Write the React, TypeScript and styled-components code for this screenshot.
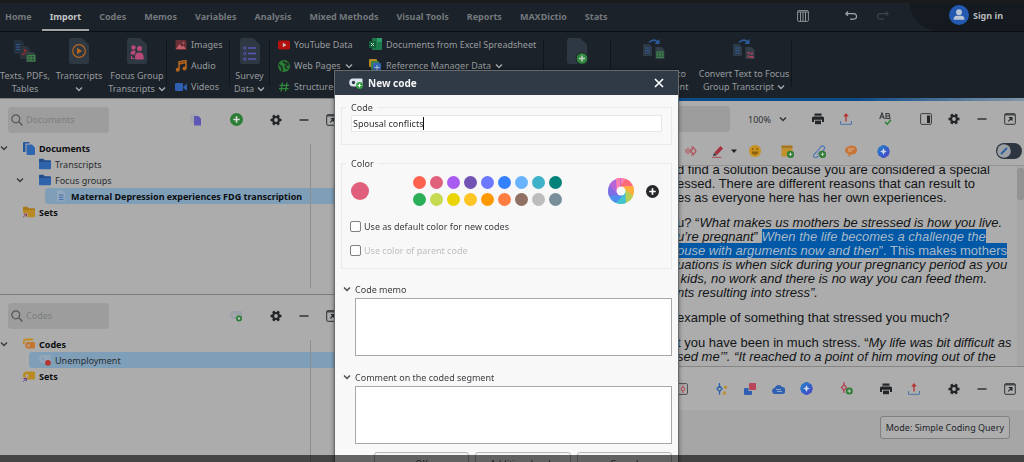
import React, { useState } from "react";
import styled, { createGlobalStyle } from "styled-components";

const GlobalStyle = createGlobalStyle`
  * { box-sizing: border-box; }
  html, body { margin: 0; height: 100%; overflow: hidden; }
  body, button, input, textarea {
    font-family: "Noto Sans", "Open Sans", sans-serif;
    font-size: 9px;
    line-height: 13px;
  }
  #root { height: 100%; }
  button { border: 0; padding: 0; margin: 0; background: none; color: inherit; }
  svg { display: block; flex: none; }
`;

/* ---------- icons ---------- */

type GlyphProps = { size?: number; children: React.ReactNode; box?: string; w?: number };
const Glyph = ({ size = 14, w, box = "0 0 14 14", children }: GlyphProps) => (
  <svg width={w ?? size} height={size} viewBox={box} fill="none" aria-hidden="true">
    {children}
  </svg>
);

const Chevron = ({ color = "#a3a7aa", size = 8 }: { color?: string; size?: number }) => (
  <Glyph size={size} box="0 0 8 8">
    <path d="M1 2.5 4 5.5 7 2.5" stroke={color} strokeWidth="1.5" />
  </Glyph>
);

const GearIcon = () => (
  <Glyph size={12} box="-6 -6 12 12">
    {[0, 60, 120].map((a) => (
      <path key={a} d="M0-5.500V5.500" stroke="#222629" strokeWidth="2.600" transform={`rotate(${a + 30})`} />
    ))}
    <circle r="3.900" fill="#222629" />
    <circle r="1.900" fill="#acacac" />
  </Glyph>
);

const MinusIcon = () => (
  <Glyph size={12} box="0 0 12 12">
    <path d="M1.500 6h9" stroke="#26292c" strokeWidth="1.400" />
  </Glyph>
);

const PopOutIcon = () => (
  <Glyph size={12} box="0 0 12 12">
    <rect x=".7" y=".7" width="10.600" height="10.600" rx="1" stroke="#303234" strokeWidth="1" />
    <path d="M1 1.800h10" stroke="#303234" strokeWidth="1.200" />
    <path d="m4.300 8.300 3.200-3.200M4.800 4.700h3.100v3.100" stroke="#26292c" strokeWidth="1.200" />
  </Glyph>
);

const PrinterIcon = () => (
  <Glyph size={12} box="0 0 12 12">
    <path d="M2.500.5h7v2.200h-7z" fill="#222629" />
    <path d="M1.500 3.400h9A1.500 1.500 0 0 1 12 4.900V9h-2V6.800H2V9H0V4.900a1.500 1.500 0 0 1 1.500-1.500z" fill="#222629" />
    <path d="M3 7.600h6v3.600H3z" fill="#222629" />
  </Glyph>
);

const ExportIcon = () => (
  <Glyph size={12} box="0 0 12 12">
    <path d="M.6 8v3.300h10.800V8" stroke="#4a73a8" strokeWidth="1" />
    <path d="M6 8.500V2" stroke="#b5302f" strokeWidth="1.300" />
    <path d="M6 0 3.300 3.500h5.400z" fill="#b5302f" />
  </Glyph>
);

const PlusCircle = ({ size = 14, fill = "#2b7d34", plus = "#d5d8d5" }: { size?: number; fill?: string; plus?: string }) => (
  <Glyph size={size}>
    <circle cx="7" cy="7" r="7" fill={fill} />
    <path d="M7 3.500v7M3.500 7h7" stroke={plus} strokeWidth="1.800" />
  </Glyph>
);

const SearchIcon = () => (
  <Glyph size={12} box="0 0 12 12">
    <circle cx="4.800" cy="4.800" r="4" stroke="#54585b" strokeWidth="1.200" />
    <path d="m7.800 7.800 3.600 3.600" stroke="#54585b" strokeWidth="1.400" />
  </Glyph>
);

const PagesIcon = () => (
  <Glyph size={13} w={12} box="0 0 12 13">
    <path d="M1 0h5.500v1.500H2.500V10H0V1q0-1 1-1z" fill="#27579c" />
    <path d="M4.500 2.500H9L12 5.500V12q0 1-1 1H4.500q-1 0-1-1V3.500q0-1 1-1z" fill="#2f66b0" />
  </Glyph>
);

const FolderIcon = ({ back = "#244f8f", front = "#2f63ab", link = false }: { back?: string; front?: string; link?: boolean }) => (
  <Glyph size={12} box="0 0 12 12">
    <path d="M0 1.500Q0 .7.8.7h3.700l1.200 1.500H11q1 0 1 .9V7H0z" fill={back} />
    <path d="M0 4h12v6.300q0 1-1 1H1q-1 0-1-1z" fill={front} />
    {link && (
      <>
        <path d="M0 7h4.500v5H0z" fill="#acacac" />
        <path d="M0 11.500 3.200 8.300M.8 8h2.700v2.700" stroke="#8d3a4c" strokeWidth="1" />
      </>
    )}
  </Glyph>
);

const TagIcon = ({ front = "#c5752f", back = "#c08a1f", variant = "stack" }: { front?: string; back?: string; variant?: "stack" | "link" }) => (
  <Glyph size={12} box="0 0 12 12">
    {variant === "stack" && <path d="M.8 6V3.500Q.8 1.500 3 1.500h7" stroke={back} strokeWidth="1.800" />}
    <path
      fill={front}
      fillRule="evenodd"
      d={variant === "stack"
        ? "M5.500 4h5.700q.8 0 .8.800v5q0 .8-.8.800H5.500a3.300 3.300 0 0 1 0-6.600zM5.600 6.200a1.200 1.200 0 1 0 0 2.400 1.200 1.200 0 0 0 0-2.400z"
        : "M4 1.500h7.200q.8 0 .8.800v6.500q0 .8-.8.800H4a4 4 0 0 1 0-8.100zM4 4a1.500 1.500 0 1 0 0 3 1.500 1.500 0 0 0 0-3z"}
    />
    {variant === "link" && (
      <>
        <path d="M0 7.500h4.200V12H0z" fill="#acacac" />
        <path d="M0 11.800 3 8.800M.6 8.500h2.700v2.700" stroke="#5a3a8c" strokeWidth="1" />
      </>
    )}
  </Glyph>
);

const CodeIcon = ({ dot }: { dot: "red" | "green" }) => (
  <Glyph size={12} box="0 0 12 12">
    <path
      fill={dot === "red" ? "#93a6ba" : "#9da1a9"}
      fillRule="evenodd"
      d="M4 1h7.200q.8 0 .8.800V9H4a4 4 0 0 1 0-8zM4 3.400a1.500 1.500 0 1 0 0 3 1.500 1.500 0 0 0 0-3z"
    />
    {dot === "red" ? (
      <circle cx="9" cy="8.800" r="2.900" fill="#b2382f" />
    ) : (
      <>
        <circle cx="9" cy="8.500" r="3" fill="#2b7d34" />
        <circle cx="9" cy="8.500" r="1.300" fill="#b9c4b9" />
      </>
    )}
  </Glyph>
);

const AiIcon = () => (
  <Glyph size={13}>
    <defs>
      <linearGradient id="ai-tint" x1="0" y1="0" x2="1" y2="1">
        <stop offset="0" stopColor="#2a86c4" />
        <stop offset=".5" stopColor="#2f62cc" />
        <stop offset="1" stopColor="#5a3fc0" />
      </linearGradient>
    </defs>
    <path d="M7 0q2 0 3 1.400Q13 2 13 4.500 14.500 7 13 9.500 13 12 10 12.600 9 14 7 14t-3-1.400Q1 12 1 9.500-.5 7 1 4.500 1 2 4 1.400 5 0 7 0z" fill="url(#ai-tint)" />
    <path d="m7 3.300 1.200 2.500L10.700 7 8.200 8.200 7 10.700 5.800 8.200 3.300 7l2.500-1.200z" fill="#ccd6e6" />
  </Glyph>
);

const DocGlyph = ({ children }: { children: React.ReactNode }) => (
  <Glyph size={26} w={20} box="0 0 20 26">
    <path d="M2.500 0H13l7 6.500v17q0 2.500-2.500 2.500h-15Q0 26 0 23.500v-21Q0 0 2.500 0z" fill="#2e3843" />
    {children}
  </Glyph>
);

const TextsIcon = () => (
  <Glyph size={26} w={24} box="0 0 24 26">
    <path d="M1 2h7l3 3v11H1z" fill="#263140" />
    <path d="M3 6.500h4M3 9h4M3 11.500h4" stroke="#2e5a93" />
    <path d="M7 8h7l3 3v10H7z" fill="#2a323c" />
    <path d="M9 17q3-2 3-6 1 4 4 4-4 0-7 2z" stroke="#9a2f35" />
    <path d="M13 14h7l3 3v7H13z" fill="#33413f" />
    <path d="M15 17.500h6.500v5.500H15zM18 17.500v5.500M15 20h6.500" stroke="#3c8a49" strokeWidth="1.200" />
  </Glyph>
);

const PeopleMark = () => (
  <>
    <circle cx="6.500" cy="9.500" r="2.200" fill="#b94a77" />
    <circle cx="12.500" cy="10.500" r="2.500" fill="#b94a77" />
    <path d="M3.500 16.500q0-4 3-4 1.700 0 2.200.8Q8 15 8 16.500z" fill="#b94a77" />
    <path d="M8 21.500v-2.500q0-4.500 4.300-4.500t4.300 4.500v2.500z" fill="#b94a77" />
    <path d="M4.500 18v2.500h2.500" stroke="#b94a77" strokeWidth="1.200" />
  </>
);

const ConvertIcon = ({ target }: { target: "table" | "group" }) => (
  <Glyph size={24} w={24} box="0 0 24 24">
    <path d="M7 4.500Q11.500 0 16 4" stroke="#2b5b9b" strokeWidth="1.600" />
    <path d="M17.500 1v5h-5z" fill="#2b5b9b" />
    <path d="M1 6h6l3 3v9H1z" fill="#2e3946" />
    <path d="M3 10h5M3 12.500h5M3 15h5" stroke="#2e5a93" />
    <path d="M13.500 9h6l3 3v9h-9z" fill="#333d46" />
    {target === "table" ? (
      <path d="M15 14h6v5.500h-6zM18 14v5.500M15 16.700h6" stroke="#3c8a49" strokeWidth="1.100" />
    ) : (
      <path d="M15.500 14h2v2h-2zM18.500 14.500h2.500v2h-2.500zM15.500 17.500h2v2h-2zM18 18h3.500v2H18z" fill="#a8405c" />
    )}
  </Glyph>
);

/* ---------- shell ---------- */

const Page = styled.div`
  height: 100%;
  display: flex;
  flex-direction: column;
  overflow: hidden;
  background: #acacac;
  color: #14171a;
`;

const TabBar = styled.header`
  display: flex;
  align-items: stretch;
  height: 31px;
  flex: none;
  background: #1c2229;
  border-top: 3px solid #1b1b1b;
`;

const Tabs = styled.nav`
  display: flex;
  flex: 1;
  gap: 2px;
`;

const Tab = styled.button<{ $active?: boolean }>`
  padding: 0 8px;
  font-weight: 700;
  color: ${(p) => (p.$active ? "#c3c6c8" : "#74797d")};
  border-bottom: 2px solid ${(p) => (p.$active ? "#a3a6a9" : "transparent")};
  &:first-child { padding-left: 5px; }
`;

const TopActions = styled.div`
  display: flex;
  align-items: center;
  gap: 18px;
  padding: 0 20px 3px 0;
`;

const SignIn = styled.button`
  display: flex;
  align-items: center;
  gap: 4px;
  padding: 0 21px 4px 39px;
  background: #141a1f;
  border-bottom-left-radius: 28px;
  font-weight: 700;
  color: #b8bbbe;
`;

const Ribbon = styled.div`
  display: flex;
  height: 67px;
  flex: none;
  background: #1c2229;
  border-top: 1px solid #0c0f12;
  color: #979b9f;
`;

const Divider = styled.div`
  width: 1px;
  margin: 8px 0 12px;
  background: #11161a;
`;

const BigButton = styled.button<{ $w: number }>`
  width: ${(p) => p.$w}px;
  flex: none;
  display: flex;
  flex-direction: column;
  align-items: center;
  justify-content: flex-start;
  gap: 5px;
  padding-top: 6px;
  white-space: nowrap;
`;

const BigLabel = styled.span`
  display: block;
  text-align: center;
`;

const LabelLine = styled.span`
  display: flex;
  align-items: center;
  justify-content: center;
  gap: 3px;
  min-height: 13px;
`;

const SmallColumn = styled.div<{ $w: number }>`
  width: ${(p) => p.$w}px;
  flex: none;
  display: flex;
  flex-direction: column;
  gap: 8px;
  padding: 6px 0 0 8px;
`;

const SmallButton = styled.button`
  display: flex;
  align-items: center;
  gap: 4px;
  height: 13px;
  white-space: nowrap;
`;

const Workspace = styled.main`
  flex: 1;
  min-height: 0;
  display: flex;
`;

const SideColumn = styled.div`
  width: 346px;
  flex: none;
  display: flex;
  flex-direction: column;
  border-top: 1px solid #7e7e7e;
`;

const SidePanel = styled.section<{ $grow?: boolean }>`
  flex: ${(p) => (p.$grow ? "1" : "0 0 195px")};
  border-top: ${(p) => (p.$grow ? "1px solid #7c7c7c" : "0")};
`;

const PanelHeader = styled.div`
  display: flex;
  align-items: center;
  height: 41px;
  padding-left: 8px;
`;

const SearchBox = styled.label`
  display: flex;
  align-items: center;
  gap: 3px;
  width: 101px;
  height: 26px;
  padding-left: 3px;
  border-radius: 4px;
  background: #9d9d9d;
`;

const SearchInput = styled.input`
  width: 80px;
  border: 0;
  padding: 0;
  background: transparent;
  outline: none;
  color: #14171a;
  &::placeholder { color: #7a7d80; opacity: 1; }
`;

const Spacer = styled.div`flex: 1;`;

const ToolButton = styled.button<{ $w?: number }>`
  width: ${(p) => p.$w ?? 28}px;
  height: 24px;
  flex: none;
  display: flex;
  align-items: center;
  justify-content: center;
`;

const Gap = styled.div`width: 12px; flex: none;`;

const Tree = styled.div`
  position: relative;
  display: flex;
  flex-direction: column;
`;

const TreeRow = styled.div<{ $depth: number }>`
  display: flex;
  height: 16px;
  padding-left: ${(p) => p.$depth * 16}px;
`;

const Twisty = styled.span`
  width: 13px;
  display: flex;
  align-items: center;
`;

const TreeItem = styled.button<{ $selected?: boolean; $bold?: boolean }>`
  flex: 1;
  display: flex;
  align-items: center;
  gap: 4px;
  padding-left: 10px;
  border-radius: 3px;
  white-space: nowrap;
  background: ${(p) => (p.$selected ? "#7f9fb9" : "transparent")};
  font-weight: ${(p) => (p.$bold ? 700 : 400)};
  color: ${(p) => (p.$bold ? "#0c0e10" : "#2a2d30")};
`;

/* Column boundary that runs over the rows of the tree */
const ColumnRule = styled.div`
  position: absolute;
  top: 4px;
  right: 35px;
  width: 1px;
  height: 144px;
  background: #8d8f91;
`;

const Viewer = styled.section`
  flex: 1;
  min-width: 0;
  display: flex;
  flex-direction: column;
  border-top: 3px solid;
  border-image: linear-gradient(90deg, #0c4a88 75%, #8296a8) 1;
`;

const Toolbar = styled.div<{ $h: number }>`
  display: flex;
  align-items: center;
  justify-content: flex-end;
  height: ${(p) => p.$h}px;
  flex: none;
`;

const ViewerSearch = styled(SearchBox)`
  width: 120px;
  margin-right: 18px;
`;

const Zoom = styled.button`
  display: flex;
  align-items: center;
  gap: 8px;
  width: 56px;
  color: #2d3033;
`;

const CodingBar = styled(Toolbar)`
  border-bottom: 1px solid #939393;
`;

const Toggle = styled.button`
  display: flex;
  align-items: center;
  width: 26px;
  height: 16px;
  margin: 0 2px 0 97px;
  padding: 1px;
  border-radius: 8px;
  background: #2d3540;
`;

const Scroller = styled.div`
  height: 200px;
  flex: none;
  display: flex;
  justify-content: flex-end;
  overflow: hidden;
`;

/* The transcript is scrolled a little, so its first line is partly under the toolbar */
const Article = styled.article`
  width: 340px;
  margin-top: -3px;
  font: 13px/14px "Liberation Sans", Arial, sans-serif;
  white-space: pre;
  color: #121416;
  p { margin: 0 0 11px; }
`;

const Marked = styled.mark`
  background: #0058a6;
  color: #a9b9c8;
`;

const ScrollTrack = styled.div`
  width: 7px;
  flex: none;
  background: #a6a6a6;
`;

const ScrollThumb = styled.div`
  height: 32px;
  margin-top: 2px;
  border-radius: 3px;
  background: #939393;
`;

const Retrieved = styled.div`
  flex: 1;
  border-top: 1px solid #868686;
  background: #a6a6a6;
`;

const RetrievedBar = styled(Toolbar)`
  background: #adadad;
`;

const ModeRow = styled.div`
  display: flex;
  justify-content: flex-end;
  padding: 6px 14px 0 0;
`;

const ModeButton = styled.button`
  height: 23px;
  padding: 0 5px;
  border: 1px solid #808080;
  border-radius: 3px;
  background: #adadad;
  color: #222529;
`;

const Shade = styled.div`
  position: fixed;
  inset: auto 0 0 0;
  height: 7px;
  background: rgba(0, 0, 0, 0.6);
  z-index: 3;
`;

/* ---------- dialog ---------- */

const Overlay = styled.div`
  position: fixed;
  inset: 0;
  z-index: 2;
  display: flex;
  justify-content: center;
  align-items: flex-start;
  padding: 70px 11px 0 0;
  overflow: hidden;
`;

const Dialog = styled.form`
  width: 345px;
  flex: none;
  border: 1px solid #666b70;
  background: #f8f8f8;
  box-shadow: 0 0 4px rgba(0, 0, 0, 0.45);
  color: #3a3d40;
`;

const TitleBar = styled.div`
  display: flex;
  align-items: center;
  gap: 5px;
  height: 24px;
  padding: 0 14px;
  background: #303a46;
`;

const Title = styled.h1`
  flex: 1;
  margin: 0;
  font-size: 10px;
  line-height: 16px;
  font-weight: 700;
  color: #f4f5f6;
`;

const DialogBody = styled.div`
  padding: 6px 6px 12px;
`;

const Group = styled.fieldset`
  min-width: 0;
  margin: 0 0 12px;
  padding: 0 9px 0 4px;
  border: 1px solid #e8e9ea;
`;

const Legend = styled.legend`
  padding: 0 5px;
`;

const NameField = styled.label`
  display: flex;
  align-items: center;
  height: 17px;
  margin: 1px 0 12px 5px;
  padding: 0 1px;
  border: 1px solid #e6e7e8;
  background: #fff;
  cursor: text;
`;

const NameInput = styled.input`
  field-sizing: content;
  max-width: 100%;
  padding: 0;
  border: 0;
  background: none;
  color: #2e3134;
  caret-color: transparent;
  outline: none;
`;

const Caret = styled.span`
  width: 1px;
  height: 13px;
  flex: none;
  background: #111;
`;

const ColorRow = styled.div`
  display: flex;
  align-items: center;
  gap: 8px;
  height: 34px;
  padding-left: 5px;
  margin: 4px 0 12px;
`;

const Current = styled.div`
  width: 18px;
  height: 18px;
  border-radius: 9px;
  background: #e0607c;
`;

const Swatches = styled.div`
  display: grid;
  grid-template-columns: repeat(9, 13px);
  gap: 4px;
  margin-left: 36px;
  flex: 1;
`;

const Swatch = styled.button<{ $color: string }>`
  width: 13px;
  height: 13px;
  border-radius: 50%;
  background: ${(p) => p.$color};
`;

const CheckLabel = styled.label<{ $disabled?: boolean }>`
  display: flex;
  align-items: center;
  gap: 3px;
  height: 12px;
  margin: 0 0 12px 4px;
  color: ${(p) => (p.$disabled ? "#bcbec0" : "#3a3d40")};
`;

const Check = styled.input`
  appearance: none;
  width: 11px;
  height: 11px;
  margin: 0;
  border: 1px solid #7d8084;
  border-radius: 2px;
  background: #fdfdfd;
  &:checked { background: #303a46; }
`;

const NoteSection = styled.div`
  margin-bottom: 13px;
  padding-left: 2px;
`;

const NoteLabel = styled.label`
  display: flex;
  align-items: center;
  gap: 4px;
  height: 16px;
`;

const NoteArea = styled.textarea`
  display: block;
  width: calc(100% - 12px);
  height: 58px;
  margin: 1px 0 0 12px;
  border: 1px solid #a5a7a9;
  background: #fff;
  resize: none;
  outline: none;
`;

const Actions = styled.div`
  display: grid;
  grid-template-columns: repeat(3, 1fr);
  gap: 6px;
  padding-left: 33px;
  margin-top: -5px;
`;

const ActionButton = styled.button`
  height: 22px;
  border: 1px solid #b5b7b9;
  border-radius: 3px;
  background: #f4f4f4;
`;

const tabs = ["Home", "Import", "Codes", "Memos", "Variables", "Analysis", "Mixed Methods", "Visual Tools", "Reports", "MAXDictio", "Stats"];

const palette = [
  "#ff6350", "#e0607c", "#a95cf2", "#7352b5", "#6c78ff", "#3381ff", "#6ab4ff", "#3fb1c8", "#00827a",
  "#2bae57", "#c5da50", "#ead500", "#ffc525", "#ff9900", "#ff7d40", "#907062", "#bdbdbd", "#788e98",
];

const wheel = ["#ff7fae", "#ff6b78", "#ffb03c", "#b7cf55", "#43c3cf", "#4f8ff0", "#7c6fe3", "#b266da"];

const ColorWheel = () => (
  <Glyph size={26} box="-13 -13 26 26">
    {wheel.map((c, i) => (
      <path key={c} d="M-4.500 -1.500 L-5 -12 A13 13 0 0 1 5 -12 L9 -9.400 L0 0 Z" fill={c} transform={`rotate(${i * 45})`} />
    ))}
    <path d="M-4.500 -1.500 L-5 -12 A13 13 0 0 1 -1 -12.950 L-1 -4 Z" fill={wheel[0]} />
    <circle r="4.500" fill="#f8f8f8" />
  </Glyph>
);

const WindowTools = () => (
  <>
    <ToolButton aria-label="Settings"><GearIcon /></ToolButton>
    <ToolButton aria-label="Minimize"><MinusIcon /></ToolButton>
    <ToolButton aria-label="Undock"><PopOutIcon /></ToolButton>
  </>
);

export default function App() {
  const [name, setName] = useState("Spousal conflicts");
  return (
    <>
      <GlobalStyle />
      <Page>
        <TabBar>
          <Tabs>
            {tabs.map((t) => (
              <Tab key={t} $active={t === "Import"}>{t}</Tab>
            ))}
          </Tabs>
          <TopActions>
            <ToolButton $w={46} aria-label="Layout">
              <Glyph size={12} box="0 0 12 12">
                <rect x=".6" y=".6" width="10.800" height="10.800" rx="1" stroke="#8f9397" strokeWidth="1" />
                <path d="M.6 2h10.800M3.500 2v9M6 2v9M8.500 2v9" stroke="#8f9397" />
              </Glyph>
            </ToolButton>
            <ToolButton $w={14} aria-label="Undo">
              <Glyph size={12} box="0 0 12 12">
                <path d="M3 1.500.8 3.700 3 5.900M.8 3.700h8a2.500 2.500 0 0 1 0 5.500H5" stroke="#a3a6a9" strokeWidth="1.200" />
              </Glyph>
            </ToolButton>
            <ToolButton $w={14} aria-label="Redo">
              <Glyph size={12} box="0 0 12 12">
                <path d="M9 1.500l2.200 2.200L9 5.900M11.200 3.700h-8a2.500 2.500 0 0 0 0 5.500H7" stroke="#3c4247" strokeWidth="1.200" />
              </Glyph>
            </ToolButton>
          </TopActions>
          <SignIn>
            <Glyph size={20} box="0 0 20 20">
              <circle cx="10" cy="10" r="10" fill="#2359b0" />
              <circle cx="10" cy="7.200" r="2.900" fill="#b9c4d4" />
              <path d="M4.500 14.800q0-4 3.500-4h4q3.500 0 3.500 4z" fill="#b9c4d4" />
            </Glyph>
            Sign in
          </SignIn>
        </TabBar>

        <Ribbon>
          <BigButton $w={50}>
            <TextsIcon />
            <BigLabel><LabelLine>Texts, PDFs,</LabelLine><LabelLine>Tables</LabelLine></BigLabel>
          </BigButton>
          <BigButton $w={58}>
            <DocGlyph>
              <circle cx="10" cy="13" r="6.300" stroke="#b5651d" strokeWidth="1.200" />
              <path d="M8 9.800v6.400l5-3.200z" fill="#b5651d" />
            </DocGlyph>
            <BigLabel><LabelLine>Transcripts</LabelLine><LabelLine><Chevron /></LabelLine></BigLabel>
          </BigButton>
          <BigButton $w={58}>
            <DocGlyph><PeopleMark /></DocGlyph>
            <BigLabel><LabelLine>Focus Group</LabelLine><LabelLine>Transcripts <Chevron /></LabelLine></BigLabel>
          </BigButton>
          <Divider />
          <SmallColumn $w={62}>
            <SmallButton>
              <Glyph size={12} box="0 0 12 12"><rect x=".5" y="1" width="11" height="10" rx="1.500" fill="#6b2f38" /><path d="m1 10 3.500-5 2.500 3 1.500-1.500L11 10z" fill="#c06068" /><circle cx="8.500" cy="4" r="1" fill="#c06068" /></Glyph>
              Images
            </SmallButton>
            <SmallButton>
              <Glyph size={12} box="0 0 12 12"><path d="M4 9.500V2l7-1.500v8" stroke="#b5651d" strokeWidth="1.600" /><path d="M4 4 11 2.500" stroke="#b5651d" strokeWidth="1.600" /><circle cx="2.700" cy="9.800" r="2" fill="#b5651d" /><circle cx="9.500" cy="8.500" r="2" fill="#b5651d" /></Glyph>
              Audio
            </SmallButton>
            <SmallButton>
              <Glyph size={12} box="0 0 12 12"><rect y="2" width="8" height="8" rx="1" fill="#2f5fb0" /><path d="m8.500 5.500 3.500-3v7.500L8.500 7z" fill="#2f5fb0" /></Glyph>
              Videos
            </SmallButton>
          </SmallColumn>
          <Divider />
          <BigButton $w={39}>
            <DocGlyph>
              <path d="M8 10h8M8 15.500h8M8 21h8" stroke="#5a55b8" strokeWidth="1.300" />
              <circle cx="4.800" cy="10" r="1.300" stroke="#5a55b8" /><circle cx="4.800" cy="15.500" r="1.300" stroke="#5a55b8" /><circle cx="4.800" cy="21" r="1.300" stroke="#5a55b8" />
            </DocGlyph>
            <BigLabel><LabelLine>Survey</LabelLine><LabelLine>Data <Chevron /></LabelLine></BigLabel>
          </BigButton>
          <Divider />
          <SmallColumn $w={91}>
            <SmallButton>
              <Glyph size={12} box="0 0 12 12"><rect y="1.500" width="12" height="9" rx="2" fill="#b3120e" /><path d="M4.800 3.800v4.400L8.500 6z" fill="#d0c4c4" /></Glyph>
              YouTube Data
            </SmallButton>
            <SmallButton>
              <Glyph size={12} box="0 0 12 12"><circle cx="6" cy="6" r="6" fill="#2b7d34" /><path d="m1 4.500 3 3v3.500M5.500 1q0 2.500 2.500 2t2 2q-2.500-.5-2.500 1.500t2 2" stroke="#1c2a24" strokeWidth="1.500" /></Glyph>
              Web Pages <Chevron />
            </SmallButton>
            <SmallButton>
              <Glyph size={12} box="0 0 12 12"><path d="M4.500 1.500 3 10.500M9 1.500 7.500 10.500M1.500 4.300h9.500M1 7.700h9.500" stroke="#2f8a3d" strokeWidth="1.300" /></Glyph>
              Structured
            </SmallButton>
          </SmallColumn>
          <SmallColumn $w={182}>
            <SmallButton>
              <Glyph size={13} box="0 0 13 13"><rect x="3" width="10" height="12" rx="1" fill="#1c7a4c" /><path d="M8 0h5v4H8z" fill="#2c9c68" /><rect y="3" width="7" height="7" rx="1" fill="#0f5f38" /><path d="m2 5 3 3M5 5 2 8" stroke="#c5d5cc" /></Glyph>
              Documents from Excel Spreadsheet
            </SmallButton>
            <SmallButton>
              <Glyph size={13} box="0 0 13 13"><rect width="8" height="8" rx="1" fill="#b5891e" /><rect x="2" y="2" width="8" height="9" rx="1" fill="#3c7f49" /><rect x="4" y="4" width="8" height="9" rx="1" fill="#3566b5" /><path d="M8 6v5M5.500 8.500h5" stroke="#b5c4dc" /></Glyph>
              Reference Manager Data <Chevron />
            </SmallButton>
          </SmallColumn>
          <Divider />
          <BigButton $w={66}>
            <Glyph size={27} w={21} box="0 0 21 27">
              <path d="M2.500 0H13l7 6.500v17q0 2.500-2.500 2.500h-15Q0 26 0 23.500v-21Q0 0 2.500 0z" fill="#2e3843" />
              <circle cx="15" cy="20.500" r="5.800" fill="#2f8a3d" stroke="#1c2229" />
              <path d="M15 17.500v6M12 20.500h6" stroke="#c5cdc6" strokeWidth="1.500" />
            </Glyph>
          </BigButton>
          <Divider />
          <BigButton $w={86}>
            <ConvertIcon target="table" />
            <BigLabel><LabelLine>Convert Text to</LabelLine><LabelLine>Table Document</LabelLine></BigLabel>
          </BigButton>
          <BigButton $w={94}>
            <ConvertIcon target="group" />
            <BigLabel><LabelLine>Convert Text to Focus</LabelLine><LabelLine>Group Transcript <Chevron /></LabelLine></BigLabel>
          </BigButton>
          <Divider />
        </Ribbon>

        <Workspace>
          <SideColumn>
            <SidePanel>
              <PanelHeader>
                <SearchBox><SearchIcon /><SearchInput placeholder="Documents" aria-label="Search documents" /></SearchBox>
                <Spacer />
                <ToolButton aria-label="Activated documents">
                  <Glyph size={12} box="0 0 12 12"><path d="M0 0h6v9H0z" fill="#9d9da8" opacity=".6" /><path d="M4 2h4.500L11 4.500v7H4z" fill="#5d58b5" /></Glyph>
                </ToolButton>
                <Gap />
                <ToolButton aria-label="Add document"><PlusCircle size={13} /></ToolButton>
                <Gap />
                <WindowTools />
              </PanelHeader>
              <Tree>
                <TreeRow $depth={0}><Twisty><Chevron color="#3a3d40" /></Twisty><TreeItem $bold><PagesIcon />Documents</TreeItem></TreeRow>
                <TreeRow $depth={1}><Twisty /><TreeItem><FolderIcon />Transcripts</TreeItem></TreeRow>
                <TreeRow $depth={1}><Twisty><Chevron color="#3a3d40" /></Twisty><TreeItem><FolderIcon />Focus groups</TreeItem></TreeRow>
                <TreeRow $depth={2}>
                  <Twisty />
                  <TreeItem $bold $selected>
                    <Glyph size={12} box="0 0 12 12"><path d="M2 .5h5.500L10 3v8.500H2z" fill="#93a8be" /><path d="M4 5h4.500M4 7.300h4.500M4 9.600h4.500" stroke="#3f6cab" /></Glyph>
                    Maternal Depression experiences FDG transcription
                  </TreeItem>
                </TreeRow>
                <TreeRow $depth={0}><Twisty /><TreeItem $bold><FolderIcon back="#a8781a" front="#ba8a22" link />Sets</TreeItem></TreeRow>
                <ColumnRule />
              </Tree>
            </SidePanel>
            <SidePanel $grow>
              <PanelHeader>
                <SearchBox><SearchIcon /><SearchInput placeholder="Codes" aria-label="Search codes" /></SearchBox>
                <Spacer />
                <ToolButton aria-label="New code"><CodeIcon dot="green" /></ToolButton>
                <Gap />
                <WindowTools />
              </PanelHeader>
              <Tree>
                <TreeRow $depth={0}><Twisty><Chevron color="#3a3d40" /></Twisty><TreeItem $bold><TagIcon />Codes</TreeItem></TreeRow>
                <TreeRow $depth={1}><Twisty /><TreeItem $selected><CodeIcon dot="red" />Unemployment</TreeItem></TreeRow>
                <TreeRow $depth={0}><Twisty /><TreeItem $bold><TagIcon variant="link" front="#ba8a22" />Sets</TreeItem></TreeRow>
                <ColumnRule />
              </Tree>
            </SidePanel>
          </SideColumn>

          <Viewer>
            <Toolbar $h={36}>
              <ViewerSearch><SearchInput aria-label="Search in document" /></ViewerSearch>
              <Zoom>100% <Chevron color="#303336" /></Zoom>
              <ToolButton aria-label="Print"><PrinterIcon /></ToolButton>
              <ToolButton aria-label="Export"><ExportIcon /></ToolButton>
              <Gap />
              <ToolButton aria-label="Spelling">
                <Glyph size={14} w={14}>
                  <path d="m.7 7 2.300-6 2.300 6M1.500 5h3M7 1v6M7 1.500h2.200q1.300 0 1.300 1.200T9.200 4H7.500h2q1.500 0 1.500 1.500T9.500 6.500H7" stroke="#34373a" strokeWidth="1.100" />
                  <path d="m6 10 2.200 2.200L12 7.800" stroke="#2b8035" strokeWidth="1.500" />
                </Glyph>
              </ToolButton>
              <Gap />
              <ToolButton aria-label="Side bar">
                <Glyph size={12} box="0 0 12 12"><rect x=".6" y=".6" width="10.800" height="10.800" rx="1" stroke="#3a3d40" /><path d="M7 2.500h3v7.500H7z" fill="#222629" /></Glyph>
              </ToolButton>
              <WindowTools />
            </Toolbar>
            <CodingBar $h={29}>
              <ToolButton aria-label="Code in vivo">
                <Glyph size={12} box="0 0 12 12"><path d="M1 4v4M3 2.500v7M5 4v4M7 1v2.500M7 8.500V11" stroke="#b04a55" /><path d="m8.500 2.500 2.500 3.500-2.500 3.500L6 6z" stroke="#b04a55" strokeWidth="1.200" /></Glyph>
              </ToolButton>
              <ToolButton $w={24} aria-label="Highlight">
                <Glyph size={13} box="0 0 13 13"><path d="M3.500 7.500 9.500 1l2.500 2.500-6 6.500z" fill="#a5303f" /><path d="m3.300 7.800 2.500 2.500-3.800.7z" fill="#2d3033" /><path d="M1 12.300h9.500" stroke="#b04a55" /></Glyph>
              </ToolButton>
              <ToolButton $w={10} aria-label="Highlight colors"><Glyph size={6} box="0 0 6 6"><path d="M0 1.500h6L3 5z" fill="#1b1e20" /></Glyph></ToolButton>
              <ToolButton $w={32} aria-label="Emoticode">
                <Glyph size={12} box="0 0 12 12"><circle cx="6" cy="6" r="6" fill="#c8921e" /><path d="M3.800 3v1.800M8.200 3v1.800" stroke="#6e4c0c" strokeWidth="1.100" /><path d="M2.800 6.500h6.400a3.200 3.200 0 0 1-6.400 0z" fill="#8a600f" /></Glyph>
              </ToolButton>
              <ToolButton $w={32} aria-label="Memo">
                <Glyph size={13} box="0 0 13 13"><path d="M.5.500h11v3H.5z" fill="#a8761a" /><path d="M.5 3.500h11v8H.5z" fill="#c1912b" /><circle cx="9.500" cy="9.300" r="3.600" fill="#2b7d34" /><path d="M9.500 7.500v3.600M7.700 9.300h3.600" stroke="#c5cdc6" /></Glyph>
              </ToolButton>
              <ToolButton $w={32} aria-label="Link">
                <Glyph size={13} box="0 0 13 13"><path d="M6 4 3 7.500M7.500 6 4.500 9.500M6 4l2-2.500a2 2 0 0 1 3 2.800L9.500 6M3 7.500.9 9.500a2 2 0 0 0 2.800 2.800L5.500 11" stroke="#4a73b8" strokeWidth="1.100" /><circle cx="9.500" cy="9.300" r="3.600" fill="#2b7d34" /><path d="M9.500 7.500v3.600M7.700 9.300h3.600" stroke="#c5cdc6" /></Glyph>
              </ToolButton>
              <ToolButton $w={32} aria-label="Comment">
                <Glyph size={12} box="0 0 12 12"><path d="M6 .5q6 0 6 4.500T6.500 9.500L3.500 12V9Q0 8 0 5T6 .500z" fill="#c57638" /><path d="M3 4h6M3 6h4" stroke="#e0b492" strokeWidth=".9" /></Glyph>
              </ToolButton>
              <ToolButton $w={32} aria-label="AI assist"><AiIcon /></ToolButton>
              <Toggle role="switch" aria-checked="false" aria-label="Edit mode">
                <Glyph size={14}><circle cx="7" cy="7" r="6.800" fill="#9da1a6" /><path d="m4 10 6-6" stroke="#2b5f9c" strokeWidth="1.800" /></Glyph>
              </Toggle>
            </CodingBar>
            <Scroller>
              <Article>
                <p>{"d find a solution because you are considered a special\nessed. There are different reasons that can result to\nes as everyone here has her own experiences."}</p>
                <p>
                  {"u? “"}<em>{"What makes us mothers be stressed is how you live.\nu’re pregnant"}</em>{"” "}
                  <Marked><em>{"When the life becomes a challenge the\nouse with arguments now and then"}</em>{"”. This makes mothers"}</Marked>
                  <em>{"\nuations is when sick during your pregnancy period as you\n kids, no work and there is no way you can feed them.\nnts resulting into stress”."}</em>
                </p>
                <p>example of something that stressed you much?</p>
                <p>{"t you have been in much stress. “"}<em>{"My life was bit difficult as\nsed me’”. “It reached to a point of him moving out of the"}</em></p>
              </Article>
              <ScrollTrack><ScrollThumb /></ScrollTrack>
            </Scroller>
            <Retrieved>
              <RetrievedBar $h={43}>
                <ToolButton aria-label="Segments"><Glyph size={12} box="0 0 12 12"><rect x=".6" y=".6" width="10.800" height="10.800" rx="1" stroke="#4a4d50" /><path d="M7 2v2M7 8v2" stroke="#b04a55" /><circle cx="7" cy="6" r="1.800" stroke="#b04a55" /></Glyph></ToolButton>
                <Gap />
                <ToolButton aria-label="Smart coding">
                  <Glyph size={12} box="0 0 12 12"><path d="M3.500 0v3M3.500 8.500v3" stroke="#2b5fa8" strokeWidth="1.300" /><path d="M3.500 3 6 5.800 3.500 8.600 1 5.800z" stroke="#2b5fa8" strokeWidth="1.300" /><path d="M9.500 2.500v3.500M7.700 4.300h3.600M8.500 8v4M6.500 10h4" stroke="#bf8a1c" strokeWidth="1.200" /></Glyph>
                </ToolButton>
                <ToolButton aria-label="Compare">
                  <Glyph size={12} box="0 0 12 12"><rect x="5" width="7" height="7" rx="1" fill="#b9455a" /><path d="M1 5h3.500v3H8v3q0 1-1 1H1q-1 0-1-1V6q0-1 1-1z" fill="#2f5fb0" /></Glyph>
                </ToolButton>
                <ToolButton aria-label="Word cloud">
                  <Glyph size={12} w={13} box="0 0 13 12"><path d="M3.500 11a3 3 0 0 1-.8-6 4 4 0 0 1 7.300-1A3.500 3.500 0 0 1 10 11z" fill="#2f5fb0" /><path d="M4 6.500h5M5 8.500h5" stroke="#8fa8cc" /></Glyph>
                </ToolButton>
                <ToolButton aria-label="AI assist"><AiIcon /></ToolButton>
                <Gap />
                <ToolButton aria-label="Add code">
                  <Glyph size={13} box="0 0 13 13"><path d="M4 0v3M4 8v3" stroke="#b04a55" strokeWidth="1.300" /><path d="M4 2.800 6.500 5.500 4 8.200 1.500 5.500z" stroke="#b04a55" strokeWidth="1.300" /><circle cx="9.300" cy="9" r="3.500" fill="#2b7d34" /><path d="M9.300 7.200v3.600M7.500 9h3.600" stroke="#c5cdc6" /></Glyph>
                </ToolButton>
                <Gap />
                <ToolButton aria-label="Print"><PrinterIcon /></ToolButton>
                <ToolButton aria-label="Export"><ExportIcon /></ToolButton>
                <Gap />
                <WindowTools />
              </RetrievedBar>
              <ModeRow><ModeButton>Mode: Simple Coding Query</ModeButton></ModeRow>
            </Retrieved>
          </Viewer>
        </Workspace>
      </Page>

      <Overlay>
        <Dialog role="dialog" aria-labelledby="dialog-title" onSubmit={(e) => e.preventDefault()}>
          <TitleBar>
            <Glyph size={11} w={14} box="0 0 14 11">
              <path fill="#dfe5ee" fillRule="evenodd" d="M4.200.500h8.500q.8 0 .8.800v7.200H4.200a4 4 0 0 1 0-8zM4.500 2.800a1.700 1.700 0 1 0 0 3.400 1.700 1.700 0 0 0 0-3.400z" />
              <circle cx="10.500" cy="7.500" r="3.400" fill="#36a445" /><path d="M10.500 5.800v3.400M8.800 7.500h3.400" stroke="#fff" />
            </Glyph>
            <Title id="dialog-title">New code</Title>
            <button type="button" aria-label="Close">
              <Glyph size={10} box="0 0 10 10"><path d="m1 1 8 8M9 1 1 9" stroke="#fff" strokeWidth="1.700" /></Glyph>
            </button>
          </TitleBar>
          <DialogBody>
            <Group>
              <Legend>Code</Legend>
              <NameField>
                <NameInput aria-label="Code name" value={name} onChange={(e) => setName(e.target.value)} />
                <Caret />
              </NameField>
            </Group>
            <Group>
              <Legend>Color</Legend>
              <ColorRow>
                <Current />
                <Swatches>{palette.map((c) => <Swatch key={c} type="button" $color={c} aria-label={c} />)}</Swatches>
                <ColorWheel />
                <ToolButton $w={20} type="button" aria-label="Add color"><PlusCircle size={13} fill="#26292c" plus="#fff" /></ToolButton>
              </ColorRow>
              <CheckLabel><Check type="checkbox" />Use as default color for new codes</CheckLabel>
              <CheckLabel $disabled><Check type="checkbox" disabled />Use color of parent code</CheckLabel>
            </Group>
            <NoteSection>
              <NoteLabel htmlFor="memo"><Chevron color="#4a4d50" />Code memo</NoteLabel>
              <NoteArea id="memo" />
            </NoteSection>
            <NoteSection>
              <NoteLabel htmlFor="comment"><Chevron color="#4a4d50" />Comment on the coded segment</NoteLabel>
              <NoteArea id="comment" />
            </NoteSection>
            <Actions>
              <ActionButton type="submit">OK</ActionButton>
              <ActionButton type="button">Additional code</ActionButton>
              <ActionButton type="button">Cancel</ActionButton>
            </Actions>
          </DialogBody>
        </Dialog>
      </Overlay>
      <Shade />
    </>
  );
}
